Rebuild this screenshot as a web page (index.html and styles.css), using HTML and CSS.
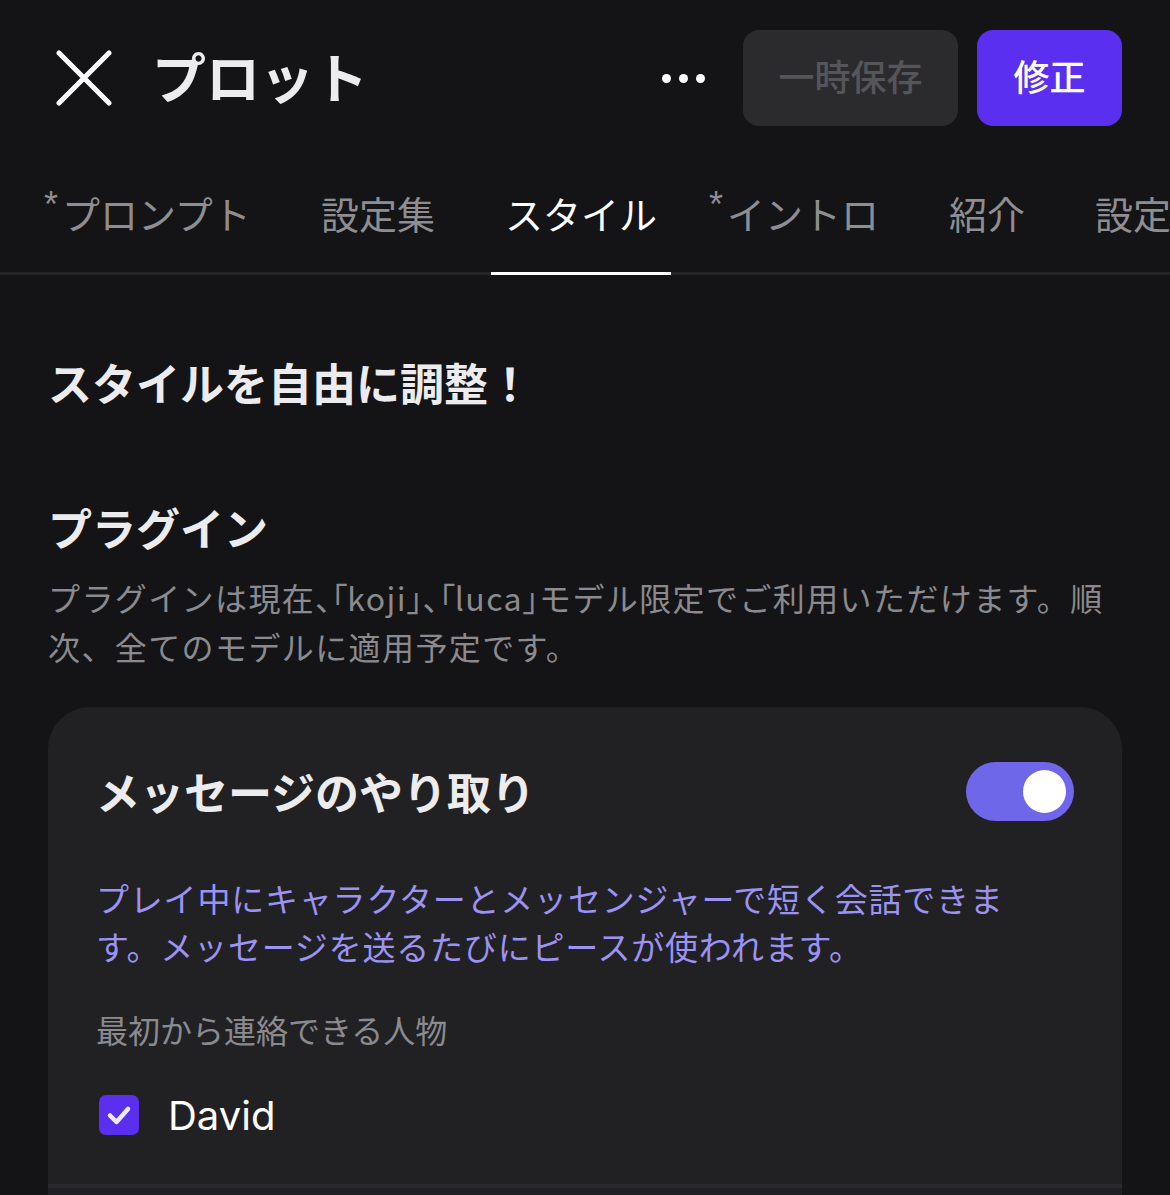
FILE: index.html
```html
<!DOCTYPE html>
<html lang="ja">
<head>
    <meta charset="UTF-8">
    <meta name="viewport" content="width=device-width, initial-scale=1.0">
    <title>プロット || スタイル</title>
    <link rel="stylesheet" href="styles.css">
</head>
<body>
<div class="page">
    <div class="topbar">
        <button class="close">
            <svg width="56" height="56" viewBox="0 0 56 56">
                <path d="M3 3 L53 53 M53 3 L3 53" stroke="#fff" stroke-width="5" stroke-linecap="round" fill="none"/>
            </svg>
        </button>
        <h1 class="title">プロット</h1>
        <div class="more"><span></span><span></span><span></span></div>
        <button class="btn btn-save">一時保存</button>
        <button class="btn btn-edit">修正</button>
    </div>

    <div class="tabs">
        <div class="tab"><span class="star">*</span>プロンプト</div>
        <div class="tab">設定集</div>
        <div class="tab active">スタイル</div>
        <div class="tab"><span class="star">*</span>イントロ</div>
        <div class="tab">紹介</div>
        <div class="tab">設定</div>
    </div>

    <div class="content">
        <h2 class="heading">スタイルを自由に調整！</h2>

        <h3 class="section-title">プラグイン</h3>
        <!-- 連続する約物だけ詰める -->
        <p class="section-desc">プラグインは現在<span class="kern">、「</span>koji<span class="kern">」、「</span>luca<span class="kern">」</span>モデル限定でご利用いただけます。順次、全てのモデルに適用予定です。</p>

        <div class="card">
            <div class="card-row">
                <div class="card-title">メッセージのやり取り</div>
                <div class="switch on"><span class="knob"></span></div>
            </div>
            <p class="card-desc">プレイ中にキャラクターとメッセンジャーで短く会話できます。メッセージを送るたびにピースが使われます。</p>
            <div class="label">最初から連絡できる人物</div>
            <div class="check-row">
                <span class="checkbox">
                    <svg width="40" height="40" viewBox="0 0 40 40">
                        <path d="M11 20.5 L17.5 27 L29 14" stroke="#efeaff" stroke-width="4.5" stroke-linecap="round" stroke-linejoin="round" fill="none"/>
                    </svg>
                </span>
                <span class="check-name">David</span>
            </div>
            <div class="card-next"></div>
        </div>
    </div>
</div>
</body>
</html>
```

FILE: styles.css
```css
* {
    margin: 0;
    padding: 0;
    box-sizing: border-box;
}

body {
    background-color: #141416;
    color: #ececee;
    font-family: "Noto Sans CJK JP", "Noto Sans", sans-serif;
    overflow: hidden;
}

.page {
    width: 1170px;
}

/* top bar */
.topbar {
    display: flex;
    align-items: center;
    height: 156px;
    padding: 0 48px 0 56px;
}

.close {
    width: 56px;
    height: 56px;
    background: none;
    border: none;
    display: flex;
}

.title {
    margin-left: 40px;
    font-size: 54px;
    font-weight: 700;
    line-height: 1;
    color: #ececee;
    flex: 1;
    padding-bottom: 4px;
}

.more {
    display: flex;
    gap: 8px;
    margin-right: 38px;
}

.more span {
    width: 9px;
    height: 9px;
    border-radius: 50%;
    background-color: #fff;
}

.btn {
    height: 96px;
    border: none;
    border-radius: 16px;
    font-family: "Noto Sans CJK JP", sans-serif;
    font-size: 36px;
    font-weight: 500;
    padding-bottom: 6px;
}

.btn-save {
    width: 215px;
    background-color: #2b2b2d;
    color: #56565a;
}

.btn-edit {
    width: 145px;
    margin-left: 19px;
    background-color: #5a2ff0;
    color: #fff;
}

/* tabs */
.tabs {
    display: flex;
    gap: 42px;
    padding-left: 48px;
    box-shadow: inset 0 -3px 0 #252528;
    overflow: hidden;
    white-space: nowrap;
    margin-top: -6px;
}

.tab {
    position: relative;
    flex-shrink: 0;
    padding: 38px 14px 34px;
    font-size: 38px;
    line-height: 50px;
    color: #8e8e92;
    border-bottom: 3px solid transparent;
}

.tab.active {
    color: #fff;
    border-bottom-color: #fff;
}

.star {
    position: absolute;
    left: -4px;
    top: 37px;
    font-family: "Liberation Sans", sans-serif;
    font-size: 36px;
    line-height: 1;
}

/* content */
.content {
    padding: 0 48px;
}

.heading {
    margin-top: 79px;
    font-size: 44px;
    font-weight: 700;
    line-height: 56px;
}

.section-title {
    margin-top: 89px;
    font-size: 44px;
    font-weight: 700;
    line-height: 56px;
}

.section-desc {
    margin-top: 18px;
    font-size: 32px;
    letter-spacing: 1.4px;
    line-height: 49px;
    color: #8a8a8f;
}

.kern {
    font-feature-settings: "palt";
    letter-spacing: 0;
}

.card {
    margin-top: 36px;
    background-color: #212124;
    border-radius: 42px;
    padding: 54px 48px 0;
}

.card-row {
    display: flex;
    align-items: center;
    justify-content: space-between;
    height: 60px;
}

.card-title {
    font-size: 44px;
    font-weight: 700;
    line-height: 56px;
}

.switch {
    width: 108px;
    height: 59px;
    border-radius: 30px;
    background-color: #6f67ea;
    padding: 8px;
    display: flex;
    justify-content: flex-end;
}

.knob {
    width: 43px;
    height: 43px;
    border-radius: 50%;
    background-color: #fff;
}

.card-desc {
    margin-top: 53px;
    max-width: 930px;
    font-size: 33px;
    letter-spacing: 0.8px;
    line-height: 48px;
    color: #9c92f2;
}

.label {
    margin-top: 35px;
    font-size: 32px;
    line-height: 48px;
    color: #8a8a8f;
}

.check-row {
    display: flex;
    align-items: center;
    gap: 29px;
    margin-top: 38px;
    height: 48px;
    padding-left: 3px;
}

.checkbox {
    width: 40px;
    height: 40px;
    border-radius: 7px;
    background-color: #5a2ff0;
    display: flex;
}

.check-name {
    font-family: "Inter", "Noto Sans", sans-serif;
    font-size: 40px;
    color: #fff;
}

.card-next {
    margin: 45px -48px 0;
    height: 80px;
    border-top: 4px solid #2a2a2e;
}
```
